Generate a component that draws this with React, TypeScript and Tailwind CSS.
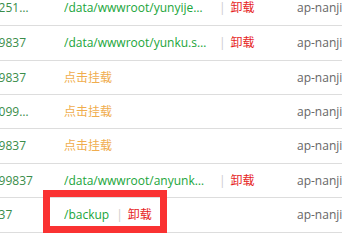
type Row = {
  bucket: string;
  path?: string;
  height: string;
};

/**
 * Mount list rows (only the visible slice of the table)
 */
const rows: Row[] = [
  { bucket: "1300000000251350099837", path: "/data/wwwroot/yunyijeweb.cn", height: "h-[35px]" },
  { bucket: "13000012599837", path: "/data/wwwroot/yunku.shop", height: "h-[35px]" },
  { bucket: "13000012599837", height: "h-[34px]" },
  { bucket: "1300001250099837", height: "h-[34px]" },
  { bucket: "13000012599837", height: "h-[35px]" },
  { bucket: "130000125199837", path: "/data/wwwroot/anyunku.com", height: "h-[34px]" },
  { bucket: "130000125137", path: "/backup", height: "h-[35px]" },
];

/**
 * Mount path cell
 */
function PathCell({ path, boxed }: { path?: string; boxed: boolean }) {
  if (!path) {
    return <span className="text-[#f0ad4e]">点击挂载</span>;
  }
  return (
    <div className="relative flex items-center leading-[18px]">
      <span className={`truncate text-[#20a53a] ${boxed ? "" : "w-[144px]"}`}>{path}</span>
      <span className={`pr-[5px] text-[#cccccc] ${boxed ? "pl-[7px]" : "pl-[11px]"}`}>|</span>
      <span className="text-[#e61e1e]">卸载</span>
      {/* Highlight box drawn over the row */}
      {boxed && (
        <div className="absolute left-[-21px] top-[-16px] h-[43px] w-[124px] border-[7px] border-[#fa3232]" />
      )}
    </div>
  );
}

export default function App() {
  return (
    <div
      className="w-[342px] h-[244px] overflow-hidden bg-white text-[12px] leading-[18px]"
      style={{ fontFamily: '"Open Sans", "Noto Sans CJK SC", sans-serif' }}
    >
      <div className="mt-[-9px] ml-[-70px] w-[480px]">
        {rows.map((row, i) => (
          <div
            key={i}
            className={`flex items-center border-b border-[#dddddd] ${row.height}`}
          >
            <div className="w-[105px] shrink-0 truncate text-[#3a8d4a]">
              {row.bucket}
            </div>
            <div className="w-[262px] shrink-0 pl-[29px]">
              <PathCell path={row.path} boxed={row.path === "/backup"} />
            </div>
            <div className="shrink-0 text-[#666666]">ap-nanjing</div>
          </div>
        ))}
      </div>
    </div>
  );
}
